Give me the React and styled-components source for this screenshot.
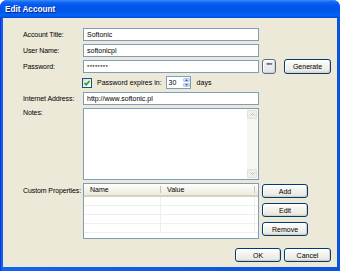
import React from "react";
import styled, { createGlobalStyle } from "styled-components";

const GlobalStyle = createGlobalStyle`
  html, body { margin: 0; padding: 0; background: #ffffff; }
  body { font-family: "Liberation Sans", Arial, sans-serif; }
`;

const Window = styled.div`
  width: 340px;
  height: 271px;
  box-sizing: border-box;
  display: flex;
  flex-direction: column;
  padding: 0 3px 4px 3px;
  background: linear-gradient(to right, #0831d9 0, #1662f0 2px, #0a52e0 100%);
  border-radius: 7px 7px 0 0;
  overflow: hidden;
`;

const TitleBar = styled.div`
  height: 18px;
  margin: 0 -3px;
  padding-left: 5px;
  display: flex;
  align-items: center;
  color: #ffffff;
  font-weight: bold;
  font-size: 8.2px;
  text-shadow: 1px 1px 0 #0f1f8a;
  background: linear-gradient(
    to bottom,
    #3c8ffa 0%,
    #1467f3 12%,
    #0058ee 30%,
    #0055e8 60%,
    #0063f5 85%,
    #004bd6 100%
  );
`;

const Body = styled.div`
  flex: 1;
  background: #ece9d8;
  padding: 10px 6px 0 20px;
  font-size: 7px;
  color: #000000;
`;

const Form = styled.div`
  display: grid;
  grid-template-columns: 57px 176px 1fr;
  column-gap: 3px;
  row-gap: 3px;
`;

const Label = styled.div`
  align-self: ${(p) => (p.$top ? "start" : "center")};
  padding-top: ${(p) => p.$pad || 0}px;
  white-space: nowrap;
  letter-spacing: -0.1px;
`;

const Input = styled.div`
  height: 13px;
  box-sizing: border-box;
  border: 1px solid #7f9db9;
  background: #ffffff;
  padding: 0 3px;
  display: flex;
  align-items: center;
  white-space: nowrap;
  font-size: ${(p) => (p.$mask ? "6px" : "7px")};
  letter-spacing: ${(p) => (p.$mask ? "0.3px" : "0")};
`;

const Side = styled.div`
  display: flex;
  align-items: center;
  height: 13px;
`;

const Button = styled.div`
  width: ${(p) => p.$w || 46}px;
  height: ${(p) => p.$h || 14}px;
  box-sizing: border-box;
  border: 1px solid #003c74;
  border-radius: 3px;
  background: linear-gradient(to bottom, #ffffff 0%, #f4f3ee 40%, #ecebe6 80%, #d6d0c5 100%);
  box-shadow: inset -1px -1px 0 #d8d2bd, inset 1px 1px 0 #ffffff;
  display: flex;
  align-items: center;
  justify-content: center;
  font-size: 7px;
  flex-shrink: 0;
`;

const DotsButton = styled(Button)`
  border-color: #586a8c;
  background: linear-gradient(to bottom, #f3f4f8, #dfe3ea);
  align-items: flex-start;
  padding-top: 2px;
  font-size: 6px;
  letter-spacing: -0.5px;
  line-height: 6px;
`;

const CheckRow = styled.div`
  grid-column: 2 / 4;
  display: flex;
  align-items: center;
  height: 13px;
`;

const CheckBox = styled.div`
  width: 10px;
  height: 10px;
  box-sizing: border-box;
  margin-left: -1px;
  border: 1px solid #1c5180;
  background: linear-gradient(135deg, #dcdcd7, #ffffff);
  display: flex;
  align-items: center;
  justify-content: center;
`;

const CheckText = styled.span`
  margin-left: 5px;
  white-space: nowrap;
`;

const Spinner = styled.div`
  margin-left: 4px;
  width: 25px;
  height: 13px;
  box-sizing: border-box;
  border: 1px solid #7f9db9;
  background: #ffffff;
  display: flex;
  align-items: stretch;
`;

const SpinValue = styled.div`
  flex: 1;
  padding-left: 2px;
  display: flex;
  align-items: center;
`;

const SpinButtons = styled.div`
  width: 7px;
  display: flex;
  flex-direction: column;
  gap: 1px;
  padding: 1px 0;
`;

const SpinPart = styled.div`
  flex: 1;
  border-radius: 1px;
  background: linear-gradient(to bottom, #e6eefc, #c3d3fd);
  border: 1px solid #b6c8f2;
  box-sizing: border-box;
  display: flex;
  align-items: center;
  justify-content: center;
`;

const Days = styled.span`
  margin-left: 6px;
`;

const NotesBox = styled.div`
  height: 72px;
  box-sizing: border-box;
  border: 1px solid #7f9db9;
  background: #ffffff;
  display: flex;
  justify-content: flex-end;
`;

const ScrollTrack = styled.div`
  width: 10px;
  background: #f7f6f1;
  display: flex;
  flex-direction: column;
  justify-content: space-between;
  padding: 1px 1px 1px 0;
`;

const ScrollButton = styled.div`
  height: 9px;
  border-radius: 1px;
  background: #efeee7;
  border: 1px solid #e5e3d8;
  box-sizing: border-box;
  display: flex;
  align-items: center;
  justify-content: center;
`;

const ListBox = styled.div`
  height: 56px;
  box-sizing: border-box;
  border: 1px solid #7f9db9;
  background: #ffffff;
  overflow: hidden;
`;

const ListRow = styled.div`
  display: grid;
  grid-template-columns: 77px 94px 1fr;
  height: ${(p) => (p.$head ? 13 : 9)}px;
  box-sizing: border-box;
  border-bottom: ${(p) => (p.$head ? "2px solid #d6d2c2" : "1px solid #eeeeee")};
  background: ${(p) => (p.$head ? "linear-gradient(to bottom, #ffffff, #ebeadb)" : "#ffffff")};
`;

const Cell = styled.div`
  display: flex;
  align-items: center;
  padding-left: 6px;
  border-right: 1px solid ${(p) => (p.$head ? "#c7c5b2" : "#eeeeee")};
  margin: ${(p) => (p.$head ? "2px 0" : "0")};
`;

const SideStack = styled.div`
  display: flex;
  flex-direction: column;
  gap: 5px;
  padding-top: 1px;
`;

const Footer = styled.div`
  display: flex;
  justify-content: flex-end;
  gap: 3px;
  margin-top: 9px;
`;

const Chevron = ({ up }) => (
  <svg width="5" height="3" viewBox="0 0 5 3">
    <path
      d={up ? "M0.5 2.5 L2.5 0.5 L4.5 2.5" : "M0.5 0.5 L2.5 2.5 L4.5 0.5"}
      fill="none"
      stroke="#b3b8c8"
      strokeWidth="1"
    />
  </svg>
);

const Arrow = ({ up }) => (
  <svg width="3" height="2" viewBox="0 0 3 2">
    <path d={up ? "M0 2 L1.5 0 L3 2 Z" : "M0 0 L1.5 2 L3 0 Z"} fill="#4d6185" />
  </svg>
);

export default function App() {
  return (
    <>
      <GlobalStyle />
      <Window>
        <TitleBar>Edit Account</TitleBar>
        <Body>
          <Form>
            <Label>Account Title:</Label>
            <Input>Softonic</Input>
            <span />

            <Label>User Name:</Label>
            <Input>softonicpl</Input>
            <span />

            <Label>Password:</Label>
            <Input $mask>********</Input>
            <Side>
              <DotsButton $w={14} $h={15}>***</DotsButton>
              <Button $w={47} $h={15} style={{ marginLeft: "auto" }}>
                Generate
              </Button>
            </Side>

            <span />
            <CheckRow>
              <CheckBox>
                <svg width="8" height="8" viewBox="0 0 8 8">
                  <path d="M1.5 4 L3.2 5.8 L6.5 2" fill="none" stroke="#21a121" strokeWidth="1.6" />
                </svg>
              </CheckBox>
              <CheckText>Password expires in:</CheckText>
              <Spinner>
                <SpinValue>30</SpinValue>
                <SpinButtons>
                  <SpinPart><Arrow up /></SpinPart>
                  <SpinPart><Arrow /></SpinPart>
                </SpinButtons>
              </Spinner>
              <Days>days</Days>
            </CheckRow>

            <Label>Internet Address:</Label>
            <Input>http://www.softonic.pl</Input>
            <span />

            <Label $top $pad={1}>Notes:</Label>
            <NotesBox>
              <ScrollTrack>
                <ScrollButton><Chevron up /></ScrollButton>
                <ScrollButton><Chevron /></ScrollButton>
              </ScrollTrack>
            </NotesBox>
            <span />

            <Label $top $pad={4}>Custom Properties:</Label>
            <ListBox>
              <ListRow $head>
                <Cell $head>Name</Cell>
                <Cell $head>Value</Cell>
              </ListRow>
              {[0, 1, 2, 3].map((i) => (
                <ListRow key={i}>
                  <Cell />
                  <Cell />
                </ListRow>
              ))}
            </ListBox>
            <SideStack>
              <Button>Add</Button>
              <Button>Edit</Button>
              <Button>Remove</Button>
            </SideStack>
          </Form>
          <Footer>
            <Button>OK</Button>
            <Button $w={47}>Cancel</Button>
          </Footer>
        </Body>
      </Window>
    </>
  );
}
